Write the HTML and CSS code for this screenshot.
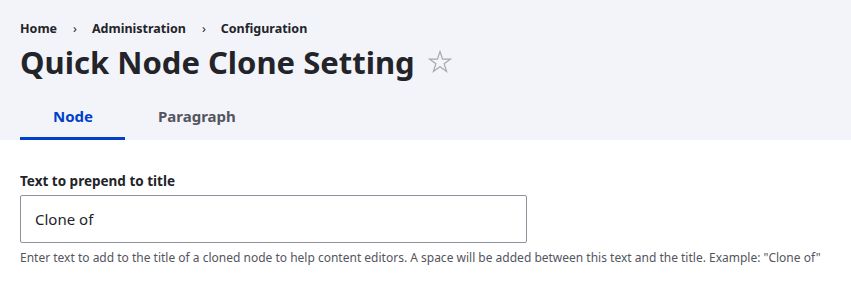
FILE: index.html
```html
<!DOCTYPE html>
<html>
<head>
<title>Quick Node Clone Setting</title>
<link rel="stylesheet" href="styles.css">
</head>
<body>
<div class="page-header">
  <nav class="breadcrumb">
    <a href="#">Home</a>
    <span class="sep">&rsaquo;</span>
    <a href="#">Administration</a>
    <span class="sep">&rsaquo;</span>
    <a href="#">Configuration</a>
  </nav>
  <h1 class="page-title">Quick Node Clone Setting
    <span class="shortcut">
      <svg width="24" height="24" viewBox="0 0 24 24"><path d="M12 1.5l2.6 7.6h8l-6.5 4.7 2.5 7.7L12 16.8l-6.6 4.7 2.5-7.7L1.4 9.1h8z" fill="none" stroke="#a8a8ae" stroke-width="1.2" stroke-linejoin="miter"/></svg>
    </span>
  </h1>
  <ul class="tabs">
    <li class="tab active"><a href="#">Node</a></li>
    <li class="tab"><a href="#">Paragraph</a></li>
  </ul>
</div>
<main class="content">
  <div class="form-item">
    <label for="prefix">Text to prepend to title</label>
    <input type="text" id="prefix" class="form-text" value="Clone of">
    <div class="description">Enter text to add to the title of a cloned node to help content editors. A space will be added between this text and the title. Example: "Clone of"</div>
  </div>
</main>
</body>
</html>
```

FILE: styles.css
```css
html {
  font-family: "Noto Sans", "Open Sans", sans-serif;
  color: #232429;
}

body {
  margin: 0;
  background: #fff;
}

a {
  text-decoration: none;
  color: inherit;
}

.page-header {
  background-color: #f3f4f9;
  padding: 19px 20px 0;
}

.breadcrumb {
  font-size: 12.5px;
  font-weight: 700;
  line-height: 20px;
  display: flex;
  align-items: center;
}

.breadcrumb .sep {
  margin: 0 15px 0 16px;
  font-weight: 400;
}

.page-title {
  margin: 3px 0 0;
  font-size: 31px;
  line-height: 40px;
  font-weight: 700;
  display: flex;
  align-items: center;
}

.shortcut {
  display: inline-flex;
  margin-left: 13px;
}

.tabs {
  list-style: none;
  margin: 11px 0 0;
  padding: 0;
  display: flex;
}

.tab a {
  display: block;
  padding: 3px 32px 0 33px;
  font-size: 15px;
  font-weight: 700;
  line-height: 41px;
  color: #545560;
  border-bottom: 3px solid transparent;
}

.tab.active a {
  color: #003ecc;
  border-bottom-color: #003ecc;
}

.content {
  padding: 32px 20px 20px;
}

.form-item label {
  display: block;
  font-size: 13.5px;
  font-weight: 700;
  line-height: 18px;
  margin-bottom: 5px;
}

.form-text {
  box-sizing: border-box;
  width: 507px;
  height: 48px;
  padding: 0 14px;
  border: 1px solid #8e929c;
  border-radius: 2px;
  font-family: inherit;
  font-size: 15px;
  color: #232429;
  background: #fff;
}

.description {
  margin-top: 6px;
  font-size: 12px;
  line-height: 18px;
  color: #545560;
}
```
